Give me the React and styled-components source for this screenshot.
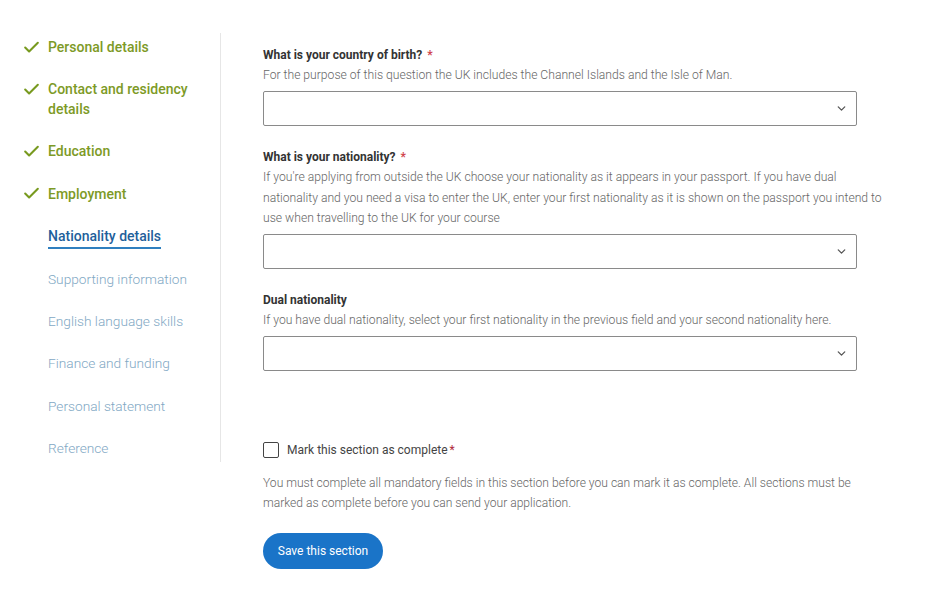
import styled, { createGlobalStyle } from "styled-components"
import { Check, ChevronDown } from "lucide-react"

const GlobalStyle = createGlobalStyle`
  body {
    margin: 0;
    background: #fff;
    font-family: Roboto, "Liberation Sans", sans-serif;
  }
`

const steps = [
  { label: "Personal details", state: "done" },
  { label: ["Contact and residency", "details"], state: "done" },
  { label: "Education", state: "done" },
  { label: "Employment", state: "done" },
  { label: "Nationality details", state: "active" },
  { label: "Supporting information", state: "todo" },
  { label: "English language skills", state: "todo" },
  { label: "Finance and funding", state: "todo" },
  { label: "Personal statement", state: "todo" },
  { label: "Reference", state: "todo" },
]

const fields = [
  {
    label: "What is your country of birth?",
    required: true,
    help: ["For the purpose of this question the UK includes the Channel Islands and the Isle of Man."],
  },
  {
    label: "What is your nationality?",
    required: true,
    help: [
      "If you're applying from outside the UK choose your nationality as it appears in your passport. If you have dual",
      "nationality and you need a visa to enter the UK, enter your first nationality as it is shown on the passport you intend to",
      "use when travelling to the UK for your course",
    ],
  },
  {
    label: "Dual nationality",
    required: false,
    help: ["If you have dual nationality, select your first nationality in the previous field and your second nationality here."],
  },
]

function App() {
  return (
    <>
      <GlobalStyle />
      <StPage>
        <StNav>
          {steps.map((step) => (
            <StStep key={Array.isArray(step.label) ? step.label[0] : step.label}>
              <StTick>
                {step.state === "done" && <Check size={19} strokeWidth={2.6} color="#789a1f" />}
              </StTick>
              <StStepText $state={step.state}>
                {Array.isArray(step.label)
                  ? step.label.map((l) => <div key={l}>{l}</div>)
                  : step.label}
              </StStepText>
            </StStep>
          ))}
        </StNav>

        <StMain>
          {fields.map((f) => (
            <StField key={f.label}>
              <StLabel>
                {f.label}
                {f.required && <StStar>*</StStar>}
              </StLabel>
              <StHelp>
                {f.help.map((line) => <div key={line}>{line}</div>)}
              </StHelp>
              <StSelect>
                <ChevronDown size={13} strokeWidth={2.4} color="#555" />
              </StSelect>
            </StField>
          ))}

          <StComplete>
            <StBox />
            <StCheckLabel>
              Mark this section as complete<StCheckStar>*</StCheckStar>
            </StCheckLabel>
          </StComplete>
          <StNote>
            <div>You must complete all mandatory fields in this section before you can mark it as complete. All sections must be</div>
            <div>marked as complete before you can send your application.</div>
          </StNote>
          <StButton>Save this section</StButton>
        </StMain>
      </StPage>
    </>
  )
}

const StPage = styled.div`
display: flex;
align-items: flex-start;
padding-top: 33px;
`

const StNav = styled.nav`
width: 221px;
box-sizing: border-box;
border-right: 1px solid #e6e6e6;
padding: 4px 0 4px 22px;
display: flex;
flex-direction: column;
gap: 22.2px;
`

const StStep = styled.div`
display: flex;
align-items: flex-start;
`

const StTick = styled.div`
width: 26px;
height: 20px;
display: flex;
align-items: center;
`

const StStepText = styled.div`
font-size: 14px;
line-height: 20px;
${({ $state }) => $state === "done" && `
  color: #7d9a26;
  font-weight: 500;
`}
${({ $state }) => $state === "active" && `
  color: #1f5f9b;
  font-weight: 500;
  border-bottom: 2px solid #2f7fbf;
  line-height: 20px;
  padding-bottom: 1px;
  margin-bottom: -2px;
`}
${({ $state }) => $state === "todo" && `
  color: #7fa8c4;
  font-weight: 300;
  font-size: 13.7px;
`}
`

const StMain = styled.main`
margin-left: 42px;
padding-top: 13px;
width: 640px;
display: flex;
flex-direction: column;
`

const StField = styled.div`
display: flex;
flex-direction: column;
margin-bottom: 22px;
`

const StLabel = styled.div`
font-size: 12px;
line-height: 18px;
font-weight: 700;
color: #333;
`

const StStar = styled.span`
color: #d0454c;
margin-left: 5px;
`

const StHelp = styled.div`
font-size: 12.15px;
line-height: 20.5px;
font-weight: 300;
color: #666;
margin-top: 1px;
`

const StSelect = styled.div`
width: 594px;
height: 35px;
box-sizing: border-box;
margin-top: 5.5px;
border: 1px solid #8a8a8a;
border-radius: 2px;
display: flex;
align-items: center;
justify-content: flex-end;
padding-right: 8px;
`

const StComplete = styled.label`
display: flex;
align-items: center;
gap: 8px;
margin-top: 49px;
`

const StBox = styled.span`
width: 16px;
height: 16px;
box-sizing: border-box;
border: 1.5px solid #444;
border-radius: 2px;
`

const StCheckLabel = styled.span`
font-size: 12px;
color: #444;
`

const StCheckStar = styled.span`
color: #b0283a;
margin-left: 2px;
`

const StNote = styled.div`
font-size: 12.1px;
line-height: 20px;
font-weight: 300;
color: #666;
margin-top: 15px;
`

const StButton = styled.button`
align-self: flex-start;
margin-top: 20px;
width: 120px;
height: 36px;
border: none;
border-radius: 18px;
background: #1a74c8;
color: #fff;
font-family: Roboto, "Liberation Sans", sans-serif;
font-size: 12px;
font-weight: 400;
cursor: pointer;
`

export default App
